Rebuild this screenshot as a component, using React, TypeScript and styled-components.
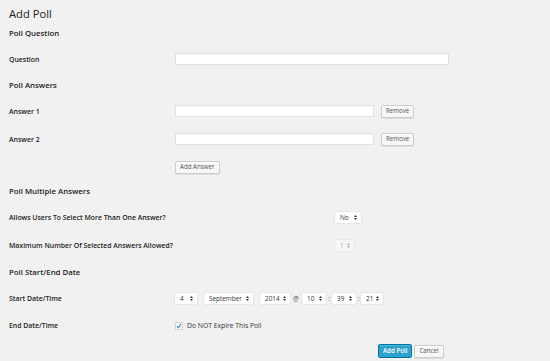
import React from 'react';
import styled, { createGlobalStyle } from 'styled-components';

const GlobalStyle = createGlobalStyle`
	html, body {
		margin: 0;
		padding: 0;
		background: #f1f1f1;
	}
	body {
		font-family: 'Open Sans', 'Liberation Sans', sans-serif;
		color: #222;
	}
`;

const Page = styled.div`
	width: 550px;
	height: 361px;
	padding: 5px 9px 0;
	box-sizing: border-box;
	overflow: hidden;
`;

const Title = styled.h2`
	margin: 0;
	font-size: 11.2px;
	font-weight: 400;
	line-height: 18px;
	color: #222;
`;

const SectionTitle = styled.h3<{ $top?: number }>`
	margin: ${p => (p.$top !== undefined ? p.$top : 6)}px 0 6px;
	font-size: 7.8px;
	font-weight: 600;
	line-height: 12px;
	color: #222;
`;

const Row = styled.div<{ $h?: number }>`
	display: flex;
	align-items: center;
	height: ${p => p.$h || 28}px;
`;

const Label = styled.div<{ $w?: number }>`
	width: ${p => p.$w || 166}px;
	flex-shrink: 0;
	font-size: 6.9px;
	font-weight: 600;
	color: #222;
`;

const Field = styled.div`
	display: flex;
	align-items: center;
`;

const TextInput = styled.input<{ $w: number }>`
	width: ${p => p.$w}px;
	height: 12px;
	box-sizing: border-box;
	margin: 0;
	padding: 0 3px;
	background: #fff;
	border: 1px solid #e2e2e2;
	box-shadow: inset 0 1px 1px rgba(0, 0, 0, 0.04);
	outline: none;
`;

const Button = styled.button<{ $primary?: boolean }>`
	height: ${p => (p.$primary ? 14 : 13)}px;
	box-sizing: border-box;
	margin: 0;
	padding: 0 4px;
	font-family: 'Open Sans', 'Liberation Sans', sans-serif;
	font-size: 6.2px;
	font-weight: ${p => (p.$primary ? 600 : 400)};
	line-height: 1;
	color: ${p => (p.$primary ? '#fff' : '#555')};
	background: ${p => (p.$primary ? '#2ea2cc' : '#f7f7f7')};
	border: 1px solid ${p => (p.$primary ? '#0074a2' : '#cccccc')};
	border-radius: 2px;
	box-shadow: ${p =>
		p.$primary
			? 'inset 0 1px 0 rgba(120, 200, 230, 0.5)'
			: 'inset 0 1px 0 #fff, 0 1px 0 rgba(0, 0, 0, 0.08)'};
	cursor: pointer;
`;

const SelectBox = styled.div<{ $w: number; $disabled?: boolean }>`
	display: flex;
	align-items: center;
	justify-content: space-between;
	width: ${p => p.$w}px;
	height: 11px;
	box-sizing: border-box;
	padding: 0 4px 0 5px;
	font-size: 6.4px;
	color: ${p => (p.$disabled ? '#aaa' : '#333')};
	background: ${p => (p.$disabled ? '#f6f6f6' : '#fff')};
	border-radius: 2px;
	box-shadow: 0 0 0 1px ${p => (p.$disabled ? '#e8e8e8' : '#e6e6e6')};
`;

const Sep = styled.span<{ $w?: number }>`
	width: ${p => p.$w || 12}px;
	text-align: center;
	font-size: 6.5px;
	color: #555;
`;

const Gap = styled.span`
	width: 7px;
`;

const Check = styled.span`
	display: inline-flex;
	align-items: center;
	justify-content: center;
	width: 8px;
	height: 8px;
	box-sizing: border-box;
	background: #fff;
	border: 1px solid #d4d4d4;
	box-shadow: inset 0 1px 1px rgba(0, 0, 0, 0.08);
	margin-right: 4px;
`;

const CheckText = styled.span`
	font-size: 6.8px;
	color: #333;
`;

const Actions = styled.div`
	display: flex;
	gap: 2px;
	padding-left: 369px;
	margin-top: 5px;
	align-items: center;
`;

const Arrows: React.FC<{ color?: string }> = ({ color = '#333' }) => (
	<svg width="3" height="5" viewBox="0 0 3 5">
		<path d="M1.5 0 L3 2 L0 2 Z" fill={color} />
		<path d="M0 3 L3 3 L1.5 5 Z" fill={color} />
	</svg>
);

const Select: React.FC<{ value: string; w: number; disabled?: boolean }> = ({
	value,
	w,
	disabled
}) => (
	<SelectBox $w={w} $disabled={disabled}>
		<span>{value}</span>
		<Arrows color={disabled ? '#aaa' : '#333'} />
	</SelectBox>
);

const App: React.FC = () => (
	<Page>
		<GlobalStyle />
		<Title>Add Poll</Title>

		<SectionTitle $top={4}>Poll Question</SectionTitle>
		<Row>
			<Label>Question</Label>
			<Field>
				<TextInput $w={274} />
			</Field>
		</Row>

		<SectionTitle>Poll Answers</SectionTitle>
		<Row>
			<Label>Answer 1</Label>
			<Field>
				<TextInput $w={199} />
				<Gap />
				<Button>Remove</Button>
			</Field>
		</Row>
		<Row>
			<Label>Answer 2</Label>
			<Field>
				<TextInput $w={199} />
				<Gap />
				<Button>Remove</Button>
			</Field>
		</Row>
		<Row $h={28}>
			<Label />
			<Field>
				<Button>Add Answer</Button>
			</Field>
		</Row>

		<SectionTitle $top={4}>Poll Multiple Answers</SectionTitle>
		<Row>
			<Label $w={326}>Allows Users To Select More Than One Answer?</Label>
			<Field>
				<Select value="No" w={26} />
			</Field>
		</Row>
		<Row>
			<Label $w={326}>Maximum Number Of Selected Answers Allowed?</Label>
			<Field>
				<Select value="1" w={19} disabled />
			</Field>
		</Row>

		<SectionTitle $top={7}>Poll Start/End Date</SectionTitle>
		<Row>
			<Label>Start Date/Time</Label>
			<Field>
				<Select value="4" w={22} />
				<Gap />
				<Select value="September" w={49} />
				<Gap />
				<Select value="2014" w={30} />
				<Sep>@</Sep>
				<Select value="10" w={24} />
				<Sep $w={6}>:</Sep>
				<Select value="39" w={24} />
				<Sep $w={5}>:</Sep>
				<Select value="21" w={22} />
			</Field>
		</Row>
		<Row $h={27}>
			<Label>End Date/Time</Label>
			<Field>
				<Check>
					<svg width="6" height="6" viewBox="0 0 6 6">
						<path
							d="M1 3.2 L2.4 4.6 L5 1.2"
							stroke="#1e8cbe"
							strokeWidth="1.2"
							fill="none"
						/>
					</svg>
				</Check>
				<CheckText>Do NOT Expire This Poll</CheckText>
			</Field>
		</Row>

		<Actions>
			<Button $primary>Add Poll</Button>
			<Button>Cancel</Button>
		</Actions>
	</Page>
);

export default App;
